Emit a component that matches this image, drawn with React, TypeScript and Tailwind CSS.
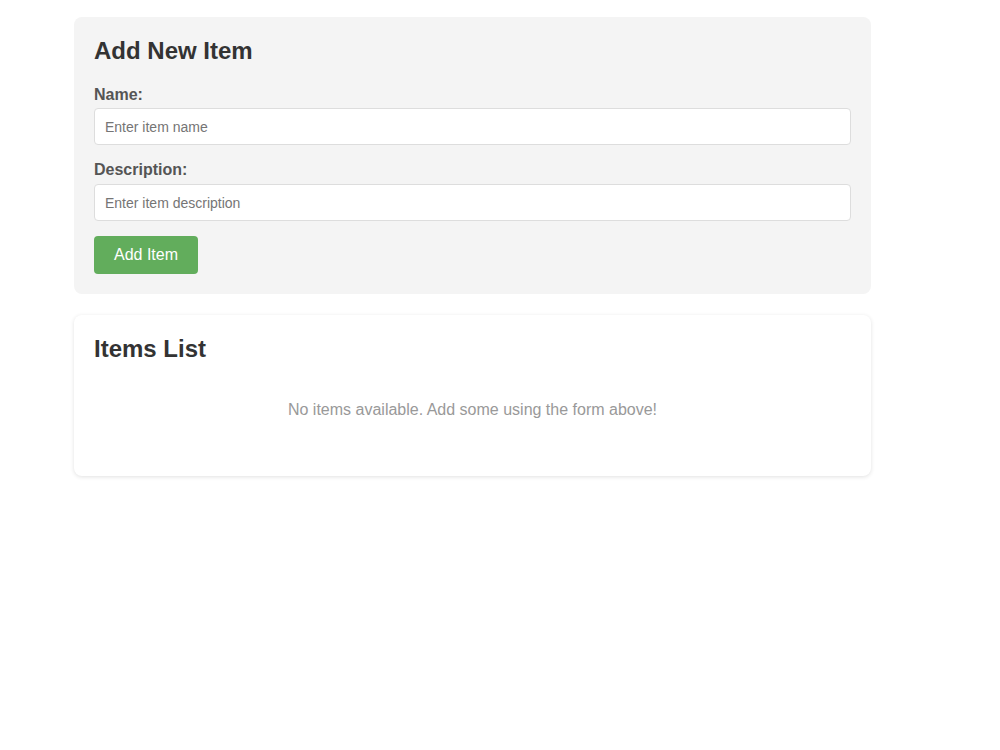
import React, { useState } from "react";

interface Item {
  id: number;
  name: string;
  description: string;
}

const App: React.FC = () => {
  const [items, setItems] = useState<Item[]>([]);
  const [name, setName] = useState("");
  const [description, setDescription] = useState("");

  const handleAdd = () => {
    if (!name.trim()) return;
    setItems([...items, { id: Date.now(), name, description }]);
    setName("");
    setDescription("");
  };

  return (
    <div className="min-h-screen bg-white font-['Liberation_Sans',Arial,sans-serif]">
      <div className="ml-[74px] w-[797px] pt-[17px]">
        {/* Form card */}
        <div className="bg-[#f4f4f4] rounded-lg p-5">
          <h2 className="text-2xl font-bold text-[#333] leading-[28px] mb-5">
            Add New Item
          </h2>
          <div className="mb-[15px]">
            <label className="block font-bold text-[#555] text-base leading-[20px] mb-[3px]">
              Name:
            </label>
            <input
              type="text"
              value={name}
              onChange={(e) => setName(e.target.value)}
              placeholder="Enter item name"
              className="block w-full bg-white border border-[#ddd] rounded px-[10px] h-[37px] text-sm text-[#333] placeholder:text-[#757575] outline-none"
            />
          </div>
          <div className="mb-[15px]">
            <label className="block font-bold text-[#555] text-base leading-[20px] mb-[4px]">
              Description:
            </label>
            <input
              type="text"
              value={description}
              onChange={(e) => setDescription(e.target.value)}
              placeholder="Enter item description"
              className="block w-full bg-white border border-[#ddd] rounded px-[10px] h-[37px] text-sm text-[#333] placeholder:text-[#757575] outline-none"
            />
          </div>
          <button
            onClick={handleAdd}
            className="bg-[#62ad5c] text-white text-base rounded px-5 h-[38px]"
          >
            Add Item
          </button>
        </div>

        {/* List card */}
        <div className="mt-[21px] bg-white rounded-lg p-5 shadow-[0_1px_4px_rgba(0,0,0,0.12)]">
          <h2 className="text-2xl font-bold text-[#333] leading-[28px]">
            Items List
          </h2>
          {items.length === 0 ? (
            <p className="text-center text-[#999] text-base leading-[18px] pt-[38px] pb-[37px]">
              No items available. Add some using the form above!
            </p>
          ) : (
            <ul className="mt-5 space-y-2">
              {items.map((item) => (
                <li key={item.id} className="border-b border-[#eee] pb-2">
                  <div className="font-bold text-[#333]">{item.name}</div>
                  <div className="text-sm text-[#666]">{item.description}</div>
                </li>
              ))}
            </ul>
          )}
        </div>
      </div>
    </div>
  );
};

export default App;
